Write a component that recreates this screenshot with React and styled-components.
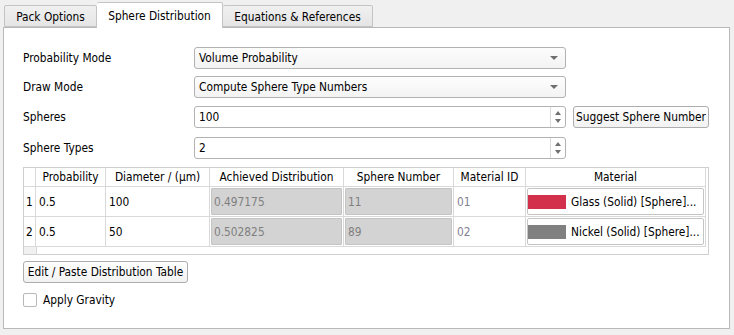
import React from "react";
import styled, { createGlobalStyle } from "styled-components";

const Global = createGlobalStyle`
  html, body { margin: 0; padding: 0; background: #f0f0f0; }
  body {
    font-family: "DejaVu Sans Condensed", "DejaVu Sans", "Liberation Sans", sans-serif;
    font-stretch: condensed;
    font-size: 11.8px;
    color: #000;
  }
`;

const Page = styled.div`
  width: 734px;
  height: 335px;
  padding: 2px 4px 0 3px;
  box-sizing: border-box;
`;

const TabBar = styled.div`
  display: flex;
  align-items: flex-end;
  height: 25px;
  position: relative;
  z-index: 1;
`;

const Tab = styled.div`
  box-sizing: border-box;
  width: ${(p) => p.$w}px;
  height: ${(p) => (p.$active ? 26 : 22)}px;
  margin-bottom: ${(p) => (p.$active ? -1 : 0)}px;
  margin-left: ${(p) => (p.$first ? 1 : 0)}px;
  display: flex;
  align-items: center;
  justify-content: center;
  padding-top: ${(p) => (p.$active ? 0 : 1)}px;
  border: 1px solid #c4c4c4;
  border-left-width: ${(p) => (p.$noLeft ? 0 : 1)}px;
  border-bottom: ${(p) => (p.$active ? "none" : "1px solid #c4c4c4")};
  border-radius: 2px 2px 0 0;
  background: ${(p) => (p.$active ? "#ffffff" : "linear-gradient(#f0f0f0, #e5e5e5)")};
  color: #000;
  white-space: nowrap;
`;

const Panel = styled.div`
  box-sizing: border-box;
  width: 727px;
  height: 302px;
  background: #fff;
  border: 1px solid #b8b8b8;
  padding: 19px 0 0 19px;
  display: flex;
  flex-direction: column;
`;

const FormRow = styled.div`
  display: flex;
  align-items: center;
  height: 22px;
  margin-top: ${(p) => p.$mt || 0}px;
`;

const Label = styled.div`
  width: 171px;
  flex: none;
`;

const Combo = styled.div`
  box-sizing: border-box;
  width: 372px;
  height: 22px;
  border: 1px solid #b2b2b2;
  border-radius: 3px;
  background: linear-gradient(#fdfdfd, #f3f3f3);
  display: flex;
  align-items: center;
  padding-left: 4px;
  position: relative;
`;

const ComboArrow = styled.div`
  position: absolute;
  right: 7px;
  top: 8px;
  width: 0;
  height: 0;
  border-left: 4px solid transparent;
  border-right: 4px solid transparent;
  border-top: 4px solid #6f6f6f;
`;

const Spin = styled.div`
  box-sizing: border-box;
  width: 372px;
  height: 22px;
  border: 1px solid #b2b2b2;
  border-radius: 3px;
  background: #fff;
  display: flex;
  align-items: center;
  padding-left: 4px;
  position: relative;
`;

const SpinButtons = styled.div`
  position: absolute;
  right: 0;
  top: 0;
  bottom: 0;
  width: 14px;
  border-left: 1px solid #dadada;
  display: flex;
  flex-direction: column;
  align-items: center;
  justify-content: center;
  gap: 4px;
`;

const Tri = styled.div`
  width: 0;
  height: 0;
  border-left: 3.5px solid transparent;
  border-right: 3.5px solid transparent;
  ${(p) => (p.$up ? "border-bottom: 4px solid #6f6f6f;" : "border-top: 4px solid #6f6f6f;")}
`;

const Button = styled.div`
  box-sizing: border-box;
  height: 22px;
  width: ${(p) => p.$w}px;
  margin-left: ${(p) => p.$ml || 0}px;
  margin-top: ${(p) => p.$mt || 0}px;
  border: 1px solid #adadad;
  border-radius: 3px;
  background: linear-gradient(#fefefe, #f2f2f2);
  display: flex;
  align-items: center;
  justify-content: center;
  white-space: nowrap;
`;

const Table = styled.div`
  box-sizing: border-box;
  margin-top: 8px;
  width: 686px;
  height: 88px;
  border: 1px solid #cfcfcf;
  display: flex;
  flex-direction: column;
  background: #fff;
`;

const GridRow = styled.div`
  display: grid;
  grid-template-columns: 12px 70px 104px 134px 110px 72px 180px;
  height: ${(p) => p.$h}px;
  flex: none;
`;

const HeadCell = styled.div`
  box-sizing: border-box;
  border-right: 1px solid #d9d9d9;
  border-bottom: 1px solid #d9d9d9;
  display: flex;
  align-items: center;
  justify-content: center;
  white-space: nowrap;
  overflow: hidden;
`;

const RowHead = styled.div`
  box-sizing: border-box;
  border-right: 1px solid #d9d9d9;
  border-bottom: 1px solid #d9d9d9;
  display: flex;
  align-items: center;
  padding-left: 2px;
`;

const Cell = styled.div`
  box-sizing: border-box;
  border-right: 1px solid #d9d9d9;
  border-bottom: 1px solid #d9d9d9;
  display: flex;
  align-items: center;
  padding-left: 3px;
  color: ${(p) => p.$color || "#000"};
`;

const DisabledCell = styled.div`
  box-sizing: border-box;
  border-right: 1px solid #d9d9d9;
  border-bottom: 1px solid #d9d9d9;
  padding: 1px;
  display: flex;
`;

const DisabledInner = styled.div`
  flex: 1;
  background: #d3d3d3;
  border: 1px solid #c4c4c4;
  border-radius: 1px;
  display: flex;
  align-items: center;
  padding-left: 2px;
  color: #7f7f7f;
`;

const MaterialCell = styled.div`
  box-sizing: border-box;
  border-bottom: 1px solid #d9d9d9;
  border-right: 1px solid #d9d9d9;
  padding: 1px;
  display: flex;
`;

const MaterialButton = styled.div`
  flex: 1;
  background: #fff;
  border: 1px solid #c4c4c4;
  border-radius: 2px;
  display: flex;
  align-items: center;
  gap: 5px;
  white-space: nowrap;
`;

const Swatch = styled.div`
  width: 38px;
  height: 14px;
  background: ${(p) => p.$c};
  flex: none;
`;

const TableFill = styled.div`
  flex: 1;
  display: flex;
`;

const FillHead = styled.div`
  width: 12px;
  background: #f0f0f0;
  border-right: 1px solid #d9d9d9;
`;

const CheckRow = styled.div`
  display: flex;
  align-items: center;
  gap: 6px;
  margin-top: 10px;
  height: 14px;
`;

const CheckBox = styled.div`
  box-sizing: border-box;
  width: 14px;
  height: 14px;
  border: 1px solid #b8b8b8;
  border-radius: 2px;
  background: #fff;
`;

const rows = [
  { n: 1, p: "0.5", d: "100", a: "0.497175", s: "11", id: "01", c: "#d3304b", m: "Glass (Solid) [Sphere]..." },
  { n: 2, p: "0.5", d: "50", a: "0.502825", s: "89", id: "02", c: "#808080", m: "Nickel (Solid) [Sphere]..." },
];

export default function App() {
  return (
    <Page>
      <Global />
      <TabBar>
        <Tab $w={93} $first>Pack Options</Tab>
        <Tab $w={126} $active $noLeft>Sphere Distribution</Tab>
        <Tab $w={150} $noLeft>Equations &amp; References</Tab>
      </TabBar>
      <Panel>
        <FormRow>
          <Label>Probability Mode</Label>
          <Combo>
            Volume Probability
            <ComboArrow />
          </Combo>
        </FormRow>
        <FormRow $mt={7}>
          <Label>Draw Mode</Label>
          <Combo>
            Compute Sphere Type Numbers
            <ComboArrow />
          </Combo>
        </FormRow>
        <FormRow $mt={8}>
          <Label>Spheres</Label>
          <Spin>
            100
            <SpinButtons>
              <Tri $up />
              <Tri />
            </SpinButtons>
          </Spin>
          <Button $w={136} $ml={7}>Suggest Sphere Number</Button>
        </FormRow>
        <FormRow $mt={9}>
          <Label>Sphere Types</Label>
          <Spin>
            2
            <SpinButtons>
              <Tri $up />
              <Tri />
            </SpinButtons>
          </Spin>
        </FormRow>
        <Table>
          <GridRow $h={19}>
            <HeadCell />
            <HeadCell>Probability</HeadCell>
            <HeadCell>Diameter / (µm)</HeadCell>
            <HeadCell>Achieved Distribution</HeadCell>
            <HeadCell>Sphere Number</HeadCell>
            <HeadCell>Material ID</HeadCell>
            <HeadCell>Material</HeadCell>
          </GridRow>
          {rows.map((r) => (
            <GridRow $h={30} key={r.n}>
              <RowHead>{r.n}</RowHead>
              <Cell>{r.p}</Cell>
              <Cell>{r.d}</Cell>
              <DisabledCell>
                <DisabledInner>{r.a}</DisabledInner>
              </DisabledCell>
              <DisabledCell>
                <DisabledInner>{r.s}</DisabledInner>
              </DisabledCell>
              <Cell $color="#80808f">{r.id}</Cell>
              <MaterialCell>
                <MaterialButton>
                  <Swatch $c={r.c} />
                  {r.m}
                </MaterialButton>
              </MaterialCell>
            </GridRow>
          ))}
          <TableFill>
            <FillHead />
          </TableFill>
        </Table>
        <Button $w={165} $mt={6}>Edit / Paste Distribution Table</Button>
        <CheckRow>
          <CheckBox />
          Apply Gravity
        </CheckRow>
      </Panel>
    </Page>
  );
}
